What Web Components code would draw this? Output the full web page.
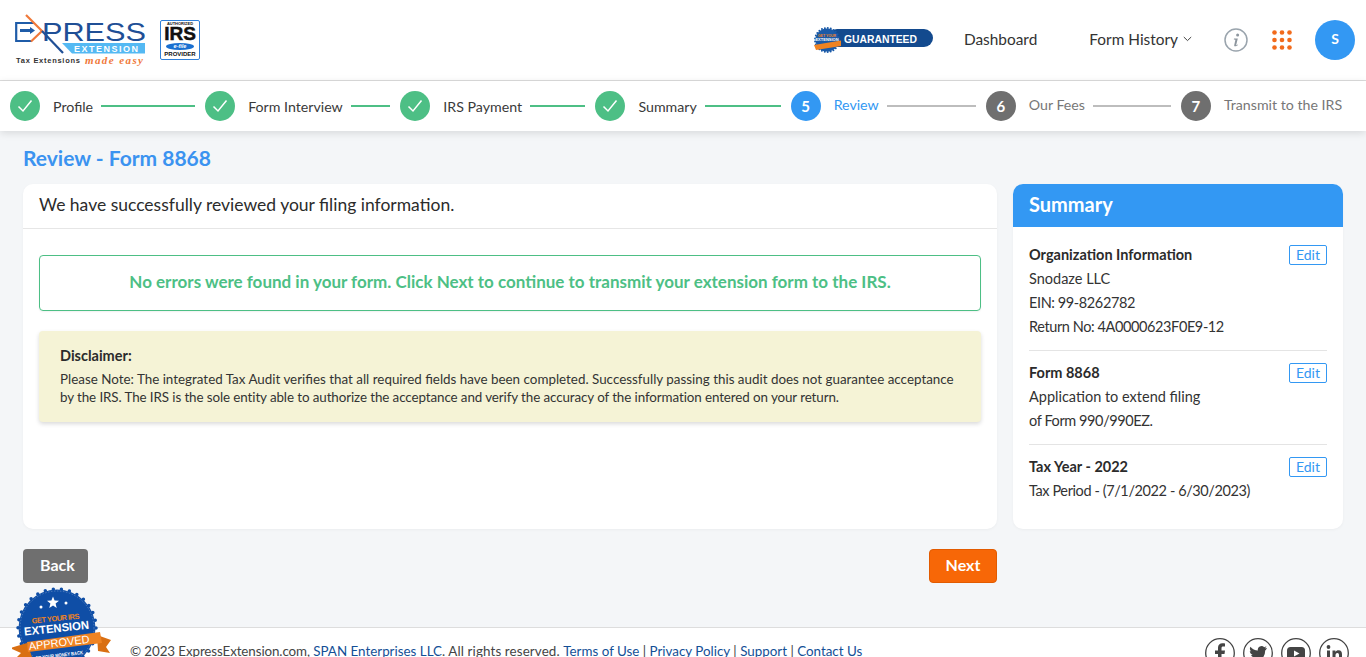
<!DOCTYPE html>
<html lang="en"><head><meta charset="utf-8"><title>Review - Form 8868</title>
<style>
html,body{margin:0;height:657px;overflow:hidden;background:#f4f6f8;font-family:Lato,"Noto Sans",sans-serif;color:#2b2b2b}
body{display:flex;flex-direction:column;position:relative}
.n{letter-spacing:-.4px}
</style></head><body>
<ee-header></ee-header>
<ee-stepper>
<ee-step state="done" label="Profile"></ee-step>
<ee-step state="done" label="Form Interview"></ee-step>
<ee-step state="done" label="IRS Payment"></ee-step>
<ee-step state="done" label="Summary"></ee-step>
<ee-step state="current" n="5" label="Review"></ee-step>
<ee-step state="todo" n="6" label="Our Fees"></ee-step>
<ee-step state="todo" n="7" label="Transmit to the IRS" last></ee-step>
</ee-stepper>
<ee-main>
<ee-review-card slot="left"></ee-review-card>
<ee-summary slot="right">
<ee-sum-block first heading="Organization Information"><div>Snodaze LLC</div><div class="n">EIN: 99-8262782</div><div class="n">Return No: 4A0000623F0E9-12</div></ee-sum-block>
<ee-sum-block heading="Form 8868"><div>Application to extend filing</div><div class="n">of Form 990/990EZ.</div></ee-sum-block>
<ee-sum-block heading="Tax Year - 2022" last><div class="n">Tax Period - (7/1/2022 - 6/30/2023)</div></ee-sum-block>
</ee-summary>
</ee-main>
<ee-footer></ee-footer>
<ee-badge></ee-badge>
<script>
function def(name,html,init){customElements.define(name,class extends HTMLElement{constructor(){super();this.attachShadow({mode:'open'}).innerHTML=typeof html==='function'?html(this):html}connectedCallback(){if(init)init(this)}})}

def('ee-header',`<style>
:host{display:flex;align-items:center;height:80px;background:#fff;border-bottom:1px solid #dcdcdc;box-sizing:content-box;flex:none}
.logo{margin-left:15px;display:block}
.irs{margin-left:14px;display:flex;flex-direction:column;align-items:center;width:40px;height:40px;box-sizing:border-box;border:1.5px solid #2f7fd8;border-radius:2px;background:#fff;overflow:hidden;font-family:"Liberation Sans",sans-serif;color:#111;font-weight:700}
.irs .a{font-size:4px;line-height:5px;margin-top:0;white-space:nowrap}
.irs .b{font-size:19px;line-height:15px;font-weight:700;-webkit-text-stroke:.5px #111}
.irs .c{font-size:5.500px;line-height:7px;color:#fff;background:#1a6fd0;border-radius:50%;padding:0 8px;font-style:italic;margin-top:2px}
.irs .d{font-size:6px;line-height:7px;margin-top:1px}
nav{margin-left:auto;display:flex;align-items:center;font-size:15.400px;color:#333}
nav span{padding-bottom:2px}
.g{display:block;margin-right:31px;margin-top:-1px}
.f{margin-left:52px;display:flex;align-items:center;gap:5px}
.i{margin-left:32px;display:block}.d{display:block}
.dots{margin-left:24px;display:block}
.av{margin:0 11px 0 23px;width:40px;height:40px;border-radius:50%;background:#3398f3;color:#fff;font-weight:700;font-size:14px;display:flex;align-items:center;justify-content:center;padding-bottom:4px;box-sizing:border-box}
</style>
<svg class="logo" width="131" height="54" viewBox="0 0 131 54" style="margin-top:-2px">
<path d="M47 31H130V41.500H57z" fill="#54b9f3"/>
<path d="M19 11H1.200V29H17" fill="none" stroke="#1f5ca8" stroke-width="2.200"/>
<path d="M5 18.500H16" stroke="#1f5ca8" stroke-width="3"/><path d="M15 15l5 3.500-5 3.500z" fill="#1f5ca8"/>
<path d="M11 3L27 19 16 29.500" fill="none" stroke="#f0793a" stroke-width="2.200"/>
<path d="M27 19L48 41" fill="none" stroke="#1f4f96" stroke-width="2.200"/>
<text x="27" y="29" font-family="Liberation Sans,sans-serif" font-size="25" fill="#1f4f96" textLength="104" lengthAdjust="spacingAndGlyphs">PRESS</text>
<text x="59" y="40" font-family="Liberation Sans,sans-serif" font-size="9" font-weight="700" fill="#fff" textLength="64" lengthAdjust="spacing">EXTENSION</text>
<text x="1" y="51" font-family="Liberation Sans,sans-serif" font-size="7.500" font-weight="700" fill="#333" textLength="64" lengthAdjust="spacing">Tax Extensions</text>
<text x="70" y="52" font-family="Liberation Serif,serif" font-size="11" font-style="italic" font-weight="700" fill="#f0793a" textLength="58" lengthAdjust="spacing">made  easy</text>
</svg>
<div class="irs"><div class="a">AUTHORIZED</div><div class="b">IRS</div><div class="c">e-file</div><div class="d">PROVIDER</div></div>
<nav>
<svg class="g" width="119" height="28" viewBox="0 0 119 28"><rect x="14" y="3" width="105" height="18" rx="9" fill="#134a8e"/>
<circle cx="13" cy="14" r="11.500" fill="#1a5aa8"/><circle cx="13" cy="14" r="12" fill="none" stroke="#1a5aa8" stroke-width="2" stroke-linecap="round" stroke-dasharray="0 3"/>
<text x="13" y="11" text-anchor="middle" font-family="Liberation Sans,sans-serif" font-size="3.500" font-weight="700" fill="#ef8322">GET YOUR</text>
<text x="13" y="14.500" text-anchor="middle" font-family="Liberation Sans,sans-serif" font-size="4" font-weight="700" fill="#fff">EXTENSION</text>
<path d="M0 19L27 14.500V20L2 24z" fill="#ef8322"/>
<text x="30" y="17" font-family="Liberation Sans,sans-serif" font-size="10" font-weight="700" fill="#fff" textLength="73" lengthAdjust="spacingAndGlyphs">GUARANTEED</text></svg>
<span>Dashboard</span>
<span class="f">Form History<svg class="d" width="9" height="6" viewBox="0 0 9 6"><path d="M.8 1l3.700 3.600L8.200 1" fill="none" stroke="#444" stroke-width="1"/></svg></span>
<svg class="i" width="24" height="24" viewBox="0 0 24 24"><circle cx="12" cy="12" r="11" fill="none" stroke="#9aa4ad" stroke-width="1.500"/><circle cx="13.600" cy="7" r="1.500" fill="#8d969e"/><path d="M10 10.500h3.800l-1.600 6.400c-.1.500.3.600 1.500-.3l.3.500c-1.600 1.400-4 1.900-3.800.1l1.200-5.400-1.600-.3z" fill="#8d969e"/></svg>
<svg class="dots" width="20" height="20" viewBox="0 0 20 20" fill="#f26a1b"><circle cx="2.500" cy="2.500" r="2.300"/><circle cx="10" cy="2.500" r="2.300"/><circle cx="17.500" cy="2.500" r="2.300"/><circle cx="2.500" cy="10" r="2.300"/><circle cx="10" cy="10" r="2.300"/><circle cx="17.500" cy="10" r="2.300"/><circle cx="2.500" cy="17.500" r="2.300"/><circle cx="10" cy="17.500" r="2.300"/><circle cx="17.500" cy="17.500" r="2.300"/></svg>
<div class="av">S</div>
</nav>`);

def('ee-stepper',`<style>:host{display:flex;flex:none;height:50px;padding-left:10px;background:#fff;box-shadow:0 2px 8px rgba(0,0,0,.12);position:relative;z-index:1;box-sizing:border-box;align-items:center}</style><slot></slot>`);

def('ee-step',h=>{const s=h.getAttribute('state'),last=h.hasAttribute('last');
const col={done:'#4dbf85',current:'#3398f3',todo:'#6f6f6f'}[s];
const tcol={done:'#3a3a3a',current:'#3398f3',todo:'#777'}[s];
const line=s==='done'?'#4dbf85':'#bdbdbd';
return `<style>
:host{display:flex;align-items:center;width:195.170px;flex:none;box-sizing:border-box;padding-right:10px}
.c{width:30px;height:30px;border-radius:50%;background:${col};color:#fff;font-weight:700;font-size:15px;display:flex;align-items:center;justify-content:center;flex:none}
.l{margin-left:13px;font-size:14.200px;color:${tcol};white-space:nowrap;${s==='done'?'':'position:relative;top:-2px'}}
.r{flex:1;height:2px;background:${line};margin-left:8px}
</style><div class="c">${s==='done'?'<svg width="16" height="14" viewBox="0 0 16 14"><path d="M1.500 7.500l4.500 4.500L14.500 1.500" fill="none" stroke="#fff" stroke-width="1.500"/></svg>':h.getAttribute('n')}</div><div class="l">${h.getAttribute('label')}</div>${last?'':'<div class="r"></div>'}`});

def('ee-main',`<style>
:host{display:block;flex:none;height:496px;padding:0 23px;box-sizing:border-box}
h1{margin:0;height:53px;display:flex;align-items:center;font-size:21px;font-weight:700;color:#3b93f0;box-sizing:border-box}
.g{display:flex;gap:16px;align-items:stretch;height:345px}
.l{width:974px;flex:none;display:flex}.r{width:330px;flex:none;display:flex}
.b{display:flex;justify-content:space-between;width:974px;margin-top:20px}
.bt{height:34px;border-radius:4px;color:#fff;font-weight:700;font-size:16px;display:flex;align-items:center;justify-content:center;box-sizing:border-box;padding-bottom:4px}
.back{width:65px;background:#6f6f6f;padding-left:4px}
.next{width:68px;background:#f76707;border:1px solid #e25b00}
</style>
<h1>Review - Form 8868</h1>
<div class="g"><div class="l"><slot name="left"></slot></div><div class="r"><slot name="right"></slot></div></div>
<div class="b"><div class="bt back">Back</div><div class="bt next">Next</div></div>`);

def('ee-review-card',`<style>
:host{display:block;flex:1;background:#fff;border-radius:10px;box-shadow:0 1px 3px rgba(0,0,0,.04)}
.t{display:flex;align-items:center;padding:0 16px 4px;box-sizing:content-box;height:40px;font-size:17.500px;border-bottom:1px solid #e6e6e6;color:#2b2b2b}
.ok{margin:26px 16px 0;height:56px;box-sizing:border-box;border:1px solid #4dbf85;border-radius:4px;display:flex;align-items:center;justify-content:center;color:#4dbf85;font-size:17px;font-weight:700;box-shadow:0 1px 2px rgba(0,0,0,.06);padding-bottom:4px}
.d{margin:20px 16px 0;height:91px;box-sizing:border-box;background:#f5f3d6;border-radius:4px;padding:15px 21px 0;box-shadow:0 2px 4px rgba(0,0,0,.15);font-size:13.400px;line-height:18px;color:#333}
.d b{display:block;font-size:14.500px;line-height:20px;color:#2b2b2b;margin-bottom:4px}
.d span{letter-spacing:-.1px}
</style>
<div class="t">We have successfully reviewed your filing information.</div>
<div class="ok">No errors were found in your form. Click Next to continue to transmit your extension form to the IRS.</div>
<div class="d"><b>Disclaimer:</b>Please Note: The integrated Tax Audit verifies that all required fields have been completed. Successfully passing this audit does not guarantee acceptance <span>by the IRS. The IRS is the sole entity able to authorize the acceptance and verify the accuracy of the information entered on your return.</span></div>`);

def('ee-summary',`<style>
:host{display:block;flex:1;background:#fff;border-radius:10px;overflow:hidden;box-shadow:0 1px 3px rgba(0,0,0,.04)}
h2{margin:0;background:#3398f3;color:#fff;font-size:20px;font-weight:700;display:flex;align-items:center;padding:0 16px 4px;box-sizing:border-box;height:43px}
.p{padding:0 16px}
</style><h2>Summary</h2><div class="p"><slot></slot></div>`);

def('ee-sum-block',h=>`<style>
:host{display:block;padding:${h.hasAttribute('first')?16:10}px 0 11px;${h.hasAttribute('last')?'':'border-bottom:1px solid #e4e4e4'};font-size:14.500px;line-height:24px;color:#333}
.h{display:flex;justify-content:space-between;align-items:center;font-weight:700;color:#2b2b2b;height:24px}
.e{width:38px;height:20px;box-sizing:border-box;border:1px solid #3398f3;border-radius:2px;color:#3398f3;font-weight:400;font-size:14px;line-height:18px;text-align:center}
</style><div class="h"><span>${h.getAttribute('heading')}</span><span class="e">Edit</span></div><slot></slot>`);

def('ee-footer',`<style>
:host{display:flex;flex:none;height:40px;background:#fff;border-top:1px solid #ddd;box-sizing:content-box;padding-left:130px;position:relative;font-size:13.380px;color:#444;overflow:hidden}
.t{padding-top:15px;white-space:nowrap}
.t .x{letter-spacing:-.1px}.t .y{letter-spacing:.12px}
a{color:#134f96;text-decoration:none}
.s{margin-left:auto;display:flex;gap:8px;padding:10px 17px 0 0}
svg{display:block;flex:none}
</style>
<div class="t"><span class="x">© 2023 ExpressExtension.com, </span><a>SPAN Enterprises LLC</a><span class="y">. All rights reserved. </span><a>Terms of Use</a> | <a>Privacy Policy</a> | <a>Support</a> | <a>Contact Us</a></div>
<div class="s">
<svg width="30" height="30" viewBox="0 0 30 30"><circle cx="15" cy="15" r="14.300" fill="#fff" stroke="#444" stroke-width="1.300"/><path d="M16.500 25v-9h3l.5-3.500h-3.500V10.300c0-1 .4-1.700 1.800-1.700H20V5.500c-.5-.1-1.500-.2-2.600-.2-2.600 0-4.400 1.600-4.400 4.500v2.700h-3V16h3v9z" fill="#444"/></svg>
<svg width="30" height="30" viewBox="0 0 30 30"><circle cx="15" cy="15" r="14.300" fill="#fff" stroke="#444" stroke-width="1.300"/><path d="M24 9.700c-.7.300-1.400.5-2.100.6.800-.5 1.300-1.200 1.600-2-.7.400-1.500.7-2.300.9a3.700 3.700 0 00-6.300 3.400c-3-.2-5.700-1.600-7.500-3.900-1 1.700-.5 3.800 1.100 4.900-.6 0-1.200-.2-1.700-.5 0 1.800 1.300 3.300 3 3.700-.5.100-1.100.2-1.700.1.500 1.500 1.900 2.500 3.500 2.600A7.500 7.500 0 016 21.900a10.500 10.500 0 0016.100-9.300c.7-.6 1.400-1.200 1.900-2.900z" fill="#444"/></svg>
<svg width="30" height="30" viewBox="0 0 30 30"><circle cx="15" cy="15" r="14.300" fill="#fff" stroke="#444" stroke-width="1.300"/><rect x="6" y="9" width="18" height="13" rx="3.500" fill="#444"/><path d="M13 12.500l5.500 3-5.500 3z" fill="#fff"/></svg>
<svg width="30" height="30" viewBox="0 0 30 30"><circle cx="15" cy="15" r="14.300" fill="#fff" stroke="#444" stroke-width="1.300"/><circle cx="9.500" cy="9" r="1.900" fill="#444"/><path d="M8 12.500h3V22H8zM13.500 12.500h2.900v1.400c.6-1 1.700-1.700 3.100-1.700 2.800 0 3.500 1.800 3.500 4.400V22h-3v-4.700c0-1.300-.3-2.400-1.600-2.400s-1.900 1-1.900 2.400V22h-3z" fill="#444"/></svg>
</div>`);

def('ee-badge',`<style>:host{position:absolute;left:12px;top:587px;width:100px;height:70px;z-index:3;display:block}svg{display:block;overflow:hidden}</style>
<svg width="100" height="70" viewBox="0 0 100 70">
<circle cx="45" cy="41" r="38.500" fill="#0f4ea6"/>
<circle cx="45" cy="41" r="39" fill="none" stroke="#0f4ea6" stroke-width="3.500" stroke-linecap="round" stroke-dasharray="0 8.170"/>
<circle cx="45" cy="41" r="37" fill="none" stroke="#fff" stroke-width=".4" stroke-dasharray="1.500 1.500" opacity=".6"/>
<polygon points="41,9.500 42.600,13.500 47,13.800 43.600,16.600 44.700,21 41,18.600 37.300,21 38.400,16.600 35,13.800 39.400,13.500" fill="#fff"/>
<circle cx="29" cy="20" r="1.500" fill="#fff"/><circle cx="54" cy="16" r="1.500" fill="#fff"/>
<g transform="rotate(-6 45 36)">
<text x="44" y="34" text-anchor="middle" font-family="Liberation Sans,sans-serif" font-weight="700" font-size="7.500" fill="#ef8322" textLength="48" lengthAdjust="spacing">GET YOUR IRS</text>
<text x="44" y="45" text-anchor="middle" font-family="Liberation Sans,sans-serif" font-weight="700" font-size="11.500" fill="#fff" textLength="65" lengthAdjust="spacingAndGlyphs">EXTENSION</text>
</g>
<path d="M-2 61L15 56 20 70H5L9 66z" fill="#d96f12"/><path d="M85 48L99 53 94 60 98 66 86 64z" fill="#d96f12"/>
<path d="M15 55L88 45 90 56 16 65z" fill="#ef8322"/>
<text x="47" y="59.500" text-anchor="middle" font-family="Liberation Sans,sans-serif" font-size="11" fill="#fff" textLength="61" lengthAdjust="spacingAndGlyphs" transform="rotate(-7 47 55)">APPROVED</text>
<text x="47" y="70" text-anchor="middle" font-family="Liberation Sans,sans-serif" font-weight="700" font-size="5" fill="#fff" textLength="48" lengthAdjust="spacingAndGlyphs" transform="rotate(-7 47 68)">OR YOUR MONEY BACK</text>
</svg>`);
</script>
</body></html>
